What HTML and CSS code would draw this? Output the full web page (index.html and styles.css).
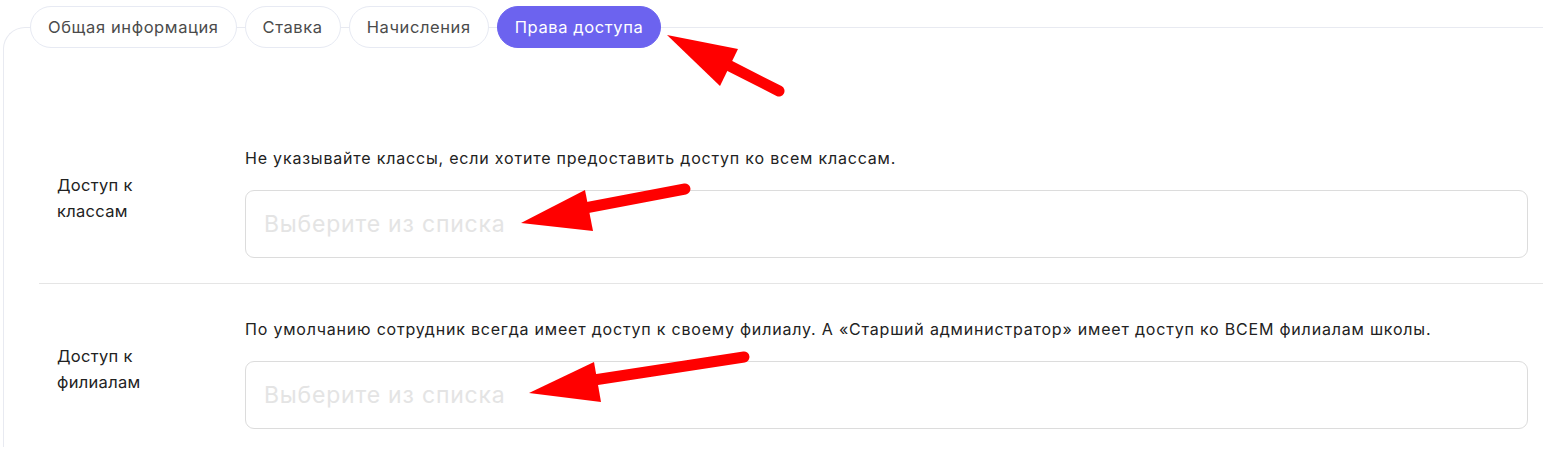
FILE: index.html
```html
<!DOCTYPE html>
<html lang="ru">
<head>
<meta charset="utf-8">
<title>Права доступа</title>
<link rel="stylesheet" href="styles.css">
</head>
<body>
<div class="page">
  <nav class="tabs">
    <button class="tab">Общая информация</button>
    <button class="tab">Ставка</button>
    <button class="tab">Начисления</button>
    <button class="tab tab-active">Права доступа</button>
  </nav>
  <section class="panel">
    <div class="row">
      <div class="label">Доступ к<br>классам</div>
      <div class="field">
        <p class="hint">Не указывайте классы, если хотите предоставить доступ ко всем классам.</p>
        <div class="select">Выберите из списка</div>
      </div>
    </div>
    <div class="row row-sep">
      <div class="label">Доступ к<br>филиалам</div>
      <div class="field">
        <p class="hint">По умолчанию сотрудник всегда имеет доступ к своему филиалу. А «Старший администратор» имеет доступ ко ВСЕМ филиалам школы.</p>
        <div class="select">Выберите из списка</div>
      </div>
    </div>
  </section>
  <svg class="annotations" width="1543" height="449" viewBox="0 0 1543 449" aria-hidden="true">
    <g fill="#ff0000" stroke="none">
      <polygon points="667,35 738,49 720,86"/>
      <polygon points="521,223 585,190 593,231"/>
      <polygon points="529,393 594,362 601,402"/>
    </g>
    <g stroke="#ff0000" stroke-width="11" stroke-linecap="round" fill="none">
      <line x1="722" y1="62" x2="779" y2="91"/>
      <line x1="585" y1="208" x2="685" y2="189"/>
      <line x1="594" y1="380" x2="744" y2="357"/>
    </g>
  </svg>
</div>
</body>
</html>
```
FILE: styles.css
```css
html, body {
  margin: 0;
  padding: 0;
  background: #ffffff;
  overflow: hidden;
}

body {
  font-family: Inter, "Noto Sans", "Liberation Sans", sans-serif;
  color: #222222;
}

.page {
  position: relative;
  width: 1543px;
  height: 449px;
  padding: 6px 0 0 3px;
  box-sizing: border-box;
}

.tabs {
  position: relative;
  z-index: 2;
  display: flex;
  gap: 8px;
  margin-left: 27px;
}

.tab {
  height: 42px;
  padding: 0 17px;
  border: 1px solid #e7eaf3;
  border-radius: 21px;
  background: #ffffff;
  font-family: inherit;
  font-size: 16.5px;
  letter-spacing: 0.6px;
  color: #4b4b4b;
  cursor: pointer;
}

.tab-active {
  background: #6c63ef;
  border-color: #6c63ef;
  color: #ffffff;
}

.panel {
  position: relative;
  z-index: 1;
  margin-top: -21px;
  padding-top: 85px;
  border: 1px solid #e8eaf1;
  border-right: none;
  border-bottom: none;
  border-top-left-radius: 22px;
  height: 420px;
  box-sizing: border-box;
}

.row {
  display: flex;
  align-items: center;
  margin-left: 35px;
  padding: 34px 15px 25px 0;
}

.row-sep {
  border-top: 1px solid #e5e5e5;
}

.label {
  width: 188px;
  flex: none;
  padding-left: 18px;
  padding-bottom: 10px;
  font-size: 16.5px;
  line-height: 26px;
  letter-spacing: 0.3px;
  color: #222222;
}

.field {
  flex: 1;
  display: flex;
  flex-direction: column;
  gap: 21px;
}

.hint {
  margin: 0;
  font-size: 16px;
  line-height: 22px;
  letter-spacing: 0.8px;
  color: #222222;
}

.select {
  height: 68px;
  box-sizing: border-box;
  border: 1px solid #dcdcdc;
  border-radius: 9px;
  padding: 0 18px;
  display: flex;
  align-items: center;
  font-size: 23px;
  letter-spacing: 0.8px;
  color: #e4e4e4;
}

.annotations {
  position: absolute;
  left: 0;
  top: 0;
  z-index: 5;
  pointer-events: none;
}
```
